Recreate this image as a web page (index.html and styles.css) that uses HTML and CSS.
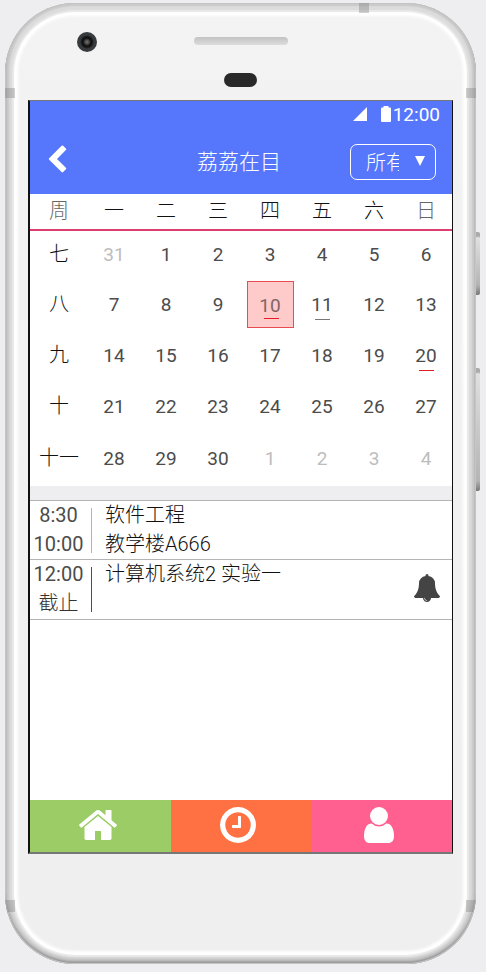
FILE: index.html
```html
<!DOCTYPE html>
<html lang="zh-CN">
<head>
<meta charset="utf-8">
<meta name="viewport" content="width=device-width, initial-scale=1">
<title>荔荔在目</title>
<link rel="stylesheet" href="styles.css">
</head>
<body>
<div class="phone">
  <span class="side-key power"></span>
  <span class="side-key volume"></span>
  <div class="shell">
    <span class="band band-top"></span>
    <span class="band band-left-upper"></span>
    <span class="band band-right-upper"></span>
    <span class="band band-left-lower"></span>
    <span class="band band-right-lower"></span>
  </div>
  <div class="forehead">
    <span class="camera"></span>
    <span class="speaker"></span>
    <span class="sensor"></span>
  </div>
  <main class="screen">
    <header class="header">
      <div class="status">
        <svg class="signal" viewBox="0 0 14 14" aria-hidden="true"><path d="M14 0v14H0z"/></svg>
        <svg class="battery" viewBox="0 0 10 16" aria-hidden="true"><path d="M2.500 1.500V0h5v1.500H9a1 1 0 0 1 1 1V15a1 1 0 0 1-1 1H1a1 1 0 0 1-1-1V2.500a1 1 0 0 1 1-1z"/></svg>
        <span>12:00</span>
      </div>
      <nav class="navbar">
        <button class="back" type="button" aria-label="返回"><svg viewBox="0 0 1792 1792"><path d="M1427 301l-531 531 531 531q19 19 19 45t-19 45l-166 166q-19 19-45 19t-45-19l-742-742q-19-19-19-45t19-45l742-742q19-19 45-19t45 19l166 166q19 19 19 45t-19 45z"/></svg></button>
        <h1 class="title">荔荔在目</h1>
        <div class="filter">
          <select aria-label="筛选"><option>所有</option></select>
          <svg class="caret" viewBox="0 0 10 10" aria-hidden="true"><path d="M0 0h10L5 10z"/></svg>
        </div>
      </nav>
    </header>

    <table class="calendar">
      <thead>
        <tr><th class="week soft">周</th><th>一</th><th>二</th><th>三</th><th>四</th><th>五</th><th>六</th><th class="soft">日</th></tr>
      </thead>
      <tbody>
        <tr><th>七</th><td><button class="day other">31</button></td><td><button class="day">1</button></td><td><button class="day">2</button></td><td><button class="day">3</button></td><td><button class="day">4</button></td><td><button class="day">5</button></td><td><button class="day">6</button></td></tr>
        <tr><th>八</th><td><button class="day">7</button></td><td><button class="day">8</button></td><td><button class="day">9</button></td><td><button class="day selected due">10</button></td><td><button class="day marked">11</button></td><td><button class="day">12</button></td><td><button class="day">13</button></td></tr>
        <tr><th>九</th><td><button class="day">14</button></td><td><button class="day">15</button></td><td><button class="day">16</button></td><td><button class="day">17</button></td><td><button class="day">18</button></td><td><button class="day">19</button></td><td><button class="day due">20</button></td></tr>
        <tr><th>十</th><td><button class="day">21</button></td><td><button class="day">22</button></td><td><button class="day">23</button></td><td><button class="day">24</button></td><td><button class="day">25</button></td><td><button class="day">26</button></td><td><button class="day">27</button></td></tr>
        <tr class="last"><th>十一</th><td><button class="day">28</button></td><td><button class="day">29</button></td><td><button class="day">30</button></td><td><button class="day other">1</button></td><td><button class="day other">2</button></td><td><button class="day other">3</button></td><td><button class="day other">4</button></td></tr>
      </tbody>
    </table>

    <ul class="events">
      <li class="event">
        <div class="time"><span>8:30</span><span>10:00</span></div>
        <div class="detail"><span>软件工程</span><span>教学楼A666</span></div>
      </li>
      <li class="event deadline">
        <div class="time"><span>12:00</span><span class="soft">截止</span></div>
        <div class="detail"><span>计算机系统2 实验一</span></div>
        <svg class="bell" viewBox="0 0 1792 1792" aria-hidden="true"><path d="M912 1696q0-16-16-16-59 0-101.500-42.500t-42.500-101.500q0-16-16-16t-16 16q0 73 51.500 124.500t124.500 51.500q16 0 16-16zm816-288q0 52-38 90t-90 38h-448q0 106-75 181t-181 75-181-75-75-181h-448q-52 0-90-38t-38-90q50-42 91-88t85-119.500 74.500-158.500 50-206 19.500-260q0-152 117-282.500t307-158.500q-8-19-8-39 0-40 28-68t68-28 68 28 28 68q0 20-8 39 190 28 307 158.500t117 282.500q0 139 19.500 260t50 206 74.500 158.500 85 119.500 91 88z"/></svg>
      </li>
    </ul>

    <nav class="tabs">
      <a class="tab home" href="#home" aria-label="主页"><svg viewBox="0 0 1792 1792"><path d="M1472 992v480q0 26-19 45t-45 19h-384v-384h-256v384h-384q-26 0-45-19t-19-45v-480q0-1 .5-3t.5-3l575-474 575 474q1 2 1 6zm223-69l-62 74q-8 9-21 11h-3q-13 0-21-7l-692-577-692 577q-12 8-24 7-13-2-21-11l-62-74q-8-10-7-23.500t11-21.500l719-599q32-26 76-26t76 26l244 204v-195q0-14 9-23t23-9h192q14 0 23 9t9 23v408l219 182q10 8 11 21.500t-7 23.500z"/></svg></a>
      <a class="tab clock" href="#schedule" aria-label="日程"><svg viewBox="0 0 1792 1792"><path d="M1024 544v448q0 14-9 23t-23 9h-320q-14 0-23-9t-9-23v-64q0-14 9-23t23-9h224v-352q0-14 9-23t23-9h64q14 0 23 9t9 23zm416 352q0-148-73-273t-198-198-273-73-273 73-198 198-73 273 73 273 198 198 273 73 273-73 198-198 73-273zm224 0q0 209-103 385.500t-279.500 279.500-385.500 103-385.500-103-279.500-279.500-103-385.500 103-385.500 279.500-279.500 385.500-103 385.500 103 279.500 279.500 103 385.500z"/></svg></a>
      <a class="tab user" href="#me" aria-label="我的"><svg viewBox="0 0 1792 1792"><path d="M1536 1399q0 109-62.500 187t-150.500 78h-854q-88 0-150.500-78t-62.500-187q0-85 8.500-160.500t31.500-152 58.500-131 94-89 134.500-34.500q131 128 313 128t313-128q76 0 134.500 34.500t94 89 58.500 131 31.500 152 8.500 160.500zm-256-887q0 159-112.500 271.500t-271.500 112.500-271.500-112.500-112.500-271.500 112.500-271.500 271.500-112.500 271.500 112.500 112.500 271.500z"/></svg></a>
    </nav>
  </main>
</div>
</body>
</html>
```

FILE: styles.css
```css
* { box-sizing: border-box; }

body {
  margin: 0;
  min-height: 100vh;
  padding: 3px 10px 8px 5px;
  display: flex;
  background: #eeeef0;
  color: #111;
  font-family: Roboto, "Noto Sans CJK SC", sans-serif;
  font-size: 20px;
  font-weight: 300;
}

button, select { font: inherit; color: inherit; }
svg { display: block; fill: currentColor; }

/* Device frame */
.phone {
  position: relative;
  flex: 1;
  display: flex;
  flex-direction: column;
  padding: 0 23px 110px;
}

.shell {
  position: absolute;
  inset: 0;
  overflow: hidden;
  border-radius: 70px;
  background: linear-gradient(#f3f3f3, #efefef);
  box-shadow:
    inset 0 0 0 1px #c4c4c4,
    inset 0 -2px 2px 1px #9a9a9a,
    inset 0 0 1px 3px #cbcbcb,
    inset 0 -2px 2px 4px #c8c8c8,
    inset 0 0 1px 7px #dcdcdc,
    inset 0 0 1px 9px #e8e8e8,
    inset 0 0 3px 13px #fff;
}

.band { position: absolute; width: 10px; height: 10px; background: rgba(120, 120, 120, .35); }
.band-top { top: 0; right: 107px; }
.band-left-upper { top: 85px; left: 0; }
.band-right-upper { top: 85px; right: 0; }
.band-left-lower { bottom: 52px; left: 0; height: 12px; }
.band-right-lower { bottom: 52px; right: 0; height: 12px; }

.side-key {
  position: absolute;
  right: -4px;
  width: 5px;
  border-radius: 0 2px 2px 0;
  background: linear-gradient(#aaa 0 4px, #e0e0e0 6px, #b4b4b4 calc(100% - 10px), #777);
}
.power { top: 229px; height: 63px; }
.volume { top: 365px; height: 123px; }

.forehead {
  position: relative;
  height: 97px;
  padding-top: 34px;
  display: flex;
  flex-direction: column;
  align-items: center;
  gap: 28px;
}
.speaker { width: 94px; height: 8px; border-radius: 4px; background: linear-gradient(#c2c2c2, #dcdcdc); }
.sensor { width: 33px; height: 14px; border-radius: 7px; background: #292929; }
.camera {
  position: absolute;
  top: 29px;
  left: 49px;
  width: 20px;
  height: 20px;
  border-radius: 50%;
  background: radial-gradient(circle, #666 0 1px, #111 4px 5px, #383b3d 7px);
}

/* App screen */
.screen {
  position: relative;
  flex: 1;
  display: flex;
  flex-direction: column;
  background: #fff;
  border: solid #111;
  border-width: 1px 1px 2px 2px;
  border-top-color: #777;
  border-bottom-color: #777;
}

.header { background: #5677fc; color: #fff; padding-bottom: 5px; }
.status {
  height: 26px;
  padding-right: 12px;
  display: flex;
  align-items: center;
  justify-content: flex-end;
  font-size: 19px;
  font-weight: 400;
}
.signal { width: 14px; height: 14px; margin-right: 14px; }
.battery { width: 10px; height: 16px; margin-right: 2px; }

.navbar {
  height: 62px;
  padding: 4px 16px 0 12px;
  display: grid;
  grid-template-columns: 1fr auto 1fr;
  align-items: center;
}
.back { width: 30px; height: 30px; padding: 0; border: 0; background: none; }
.title { margin: 0; font-size: 21px; font-weight: 300; }
.filter { position: relative; justify-self: end; margin-top: 4px; }
.filter select {
  display: block;
  width: 86px;
  height: 36px;
  padding: 2px 36px 0 15px;
  appearance: none;
  border: 1px solid #fff;
  border-radius: 7px;
  background: none;
}
.caret { position: absolute; top: 12px; right: 11px; width: 10px; height: 10px; pointer-events: none; }

.calendar { width: 100%; table-layout: fixed; border-collapse: collapse; }
.calendar th, .calendar td { padding: 0; text-align: center; font-weight: 300; }
.calendar .week { width: 58px; }
.calendar thead th { height: 36px; border-bottom: 2px solid #dc3e6e; line-height: 31px; }
.calendar tbody tr { height: 51px; }
.calendar tbody .last { height: 52px; }
.calendar tbody th, .calendar tbody td { vertical-align: top; line-height: 47px; }
.calendar .last th, .calendar .last td { padding-top: 1px; }
.calendar .soft, .soft { color: #666; }

.day {
  position: relative;
  display: block;
  width: 47px;
  height: 47px;
  margin: 0 auto;
  padding: 0;
  border: 0;
  background: none;
  color: #4c4c4c;
  font-size: 19px;
  font-weight: 400;
}
.day.other { color: #bdbdbd; }
.day.selected { border: 1px solid #e84e51; background: #ffcaca; color: #806565; }
.day.marked::after, .day.due::after {
  content: "";
  position: absolute;
  left: 16px;
  bottom: 8px;
  width: 15px;
  height: 1px;
  background: #777;
}
.day.due::after { background: #e51c23; }

.events {
  margin: 0;
  padding: 0;
  list-style: none;
  border-top: 14px solid #eeeef0;
}
.event {
  height: 60px;
  display: flex;
  border-bottom: 1px solid #b4b4b4;
  line-height: 29px;
}
.event:first-child { border-top: 1px solid #b4b4b4; }
.time { width: 57px; text-align: center; font-weight: 400; color: #4c4c4c; }
.time .soft { font-weight: 300; color: #333; }
.time span, .detail span { display: block; }
.event::before { content: ""; order: 1; width: 1px; height: 45px; margin: 7px 13px 0 4px; background: #b4b4b4; }
.event.deadline::before { background: #d0161c; }
.detail { flex: 1; order: 2; }
.bell { order: 3; width: 28px; height: 28px; margin: 14px 11px 0 0; color: #444; }

.tabs { margin-top: auto; display: grid; grid-template-columns: repeat(3, 1fr); }
.tab { height: 52px; padding: 4px 5px 6px 0; display: flex; justify-content: center; color: #fff; }
.tab svg { width: 42px; height: 42px; }
.home { background: #9ccc65; }
.clock { background: #ff7043; }
.user { background: #ff6090; }
```
